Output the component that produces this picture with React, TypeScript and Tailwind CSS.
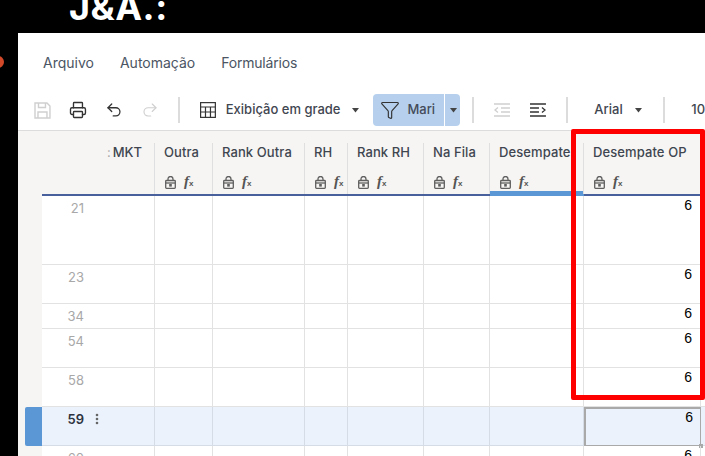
import React from "react";
import { Printer, Undo2, Redo2, Funnel } from "lucide-react";

const cols = [
  { name: "Outra", w: "w-[58px]" },
  { name: "Rank Outra", w: "w-[92px]" },
  { name: "RH", w: "w-[43px]" },
  { name: "Rank RH", w: "w-[76px]" },
  { name: "Na Fila", w: "w-[66px]" },
  { name: "Desempate", w: "w-[94px]" },
];

const rows = [
  { n: "21", h: "h-[69px]" },
  { n: "23", h: "h-[39px]" },
  { n: "34", h: "h-[25px]" },
  { n: "54", h: "h-[39px]" },
  { n: "58", h: "h-[39px]" },
  { n: "59", h: "h-[39px]", sel: true },
  { n: "60", h: "h-[39px]" },
];

const Caret = ({ className = "" }: { className?: string }) => (
  <svg width="7" height="5" viewBox="0 0 7 5" className={className}>
    <path d="M0 0h7L3.5 4.5z" fill="#444" />
  </svg>
);

const Sep = ({ className = "" }: { className?: string }) => (
  <div className={"h-[26px] w-[2px] shrink-0 bg-[#dcdcdc] " + className} />
);

const LockFx = () => (
  <div className="ml-[1px] flex items-center gap-[8px] text-[#555]">
    <svg width="11" height="13" viewBox="0 0 11 13" fill="none" stroke="#5f5f5f" strokeWidth="1.3">
      <path d="M3 4.5V3a2.5 2.5 0 0 1 5 0v1.5" />
      <rect x="0.7" y="4.5" width="9.6" height="7.8" rx="0.8" />
      <path d="M0.7 7h9.6" />
      <rect x="4.2" y="8" width="2.6" height="2.6" fill="#5f5f5f" stroke="none" />
    </svg>
    <span className="font-['Liberation_Serif',serif] text-[15px] leading-[14px] font-bold italic">
      f<span className="font-['Liberation_Sans',sans-serif] text-[8px] not-italic">x</span>
    </span>
  </div>
);

export default function App() {
  return (
    <div className="relative flex h-[456px] w-[705px] flex-col overflow-hidden bg-black font-['Inter',sans-serif]">
      <div className="h-[33px] shrink-0 overflow-hidden pl-[69px]">
        <div className="mt-[-11px] font-['Inter',sans-serif] text-[36px] leading-[36px] font-bold tracking-[0.5px] text-white">
          J&amp;A.:
        </div>
      </div>
      <div className="absolute top-[56px] left-[-8px] h-[12px] w-[12px] rounded-full bg-[#d2492a]" />

      <div className="ml-[18px] flex min-h-0 flex-1 flex-col overflow-hidden bg-white">
        <div className="flex h-[57px] shrink-0 items-center gap-[26px] pt-[1px] pl-[25px] text-[14px] text-[#4b5563]">
          <span>Arquivo</span>
          <span>Automação</span>
          <span className="tracking-[-0.2px]">Formulários</span>
        </div>

        <div className="flex h-[40px] shrink-0 items-center pl-[16px] text-[13px] whitespace-nowrap text-[#3f4650]">
          <svg width="17" height="17" viewBox="0 0 17 17" fill="none" stroke="#cfcfcf" strokeWidth="1.4">
            <path d="M1 1h12l3 3v12H1z" />
            <path d="M4.5 1v4.5h7V1M4 16v-6h9v6" />
          </svg>
          <Printer size={18} strokeWidth={1.8} color="#333" className="ml-[18px]" />
          <Undo2 size={18} strokeWidth={1.7} color="#333" className="ml-[18px]" />
          <Redo2 size={18} strokeWidth={1.5} color="#cfcfcf" className="ml-[18px]" />
          <Sep className="ml-[19px]" />
          <svg width="16" height="16" viewBox="0 0 16 16" fill="none" stroke="#333" strokeWidth="1.2" className="ml-[20px]">
            <rect x="0.6" y="0.6" width="14.8" height="14.8" />
            <path d="M0.6 5h14.8M0.6 10h14.8M5.5 5v10.4M10.5 5v10.4" />
          </svg>
          <span className="ml-[10px] w-[116px] font-medium">Exibição em grade</span>
          <Caret className="ml-[11px]" />
          <div className="ml-[14px] flex h-[32px] w-[87px] shrink-0 items-center rounded-[4px] bg-[#b5cfec]">
            <Funnel size={20} strokeWidth={1.4} color="#333" className="ml-[7px]" />
            <span className="ml-[7px] w-[30px] font-medium text-[#444b5a]">Mari</span>
            <div className="ml-[7px] h-full w-[1px] bg-white" />
            <Caret className="ml-[5px]" />
          </div>
          <Sep className="ml-[12px]" />
          <svg width="16" height="14" viewBox="0 0 16 14" fill="none" stroke="#cfcfcf" strokeWidth="1.3" className="ml-[20px]">
            <path d="M0 1h16M7 5h9M7 9h9M0 13h16M4 4.5L1 7l3 2.5" />
          </svg>
          <svg width="16" height="14" viewBox="0 0 16 14" fill="none" stroke="#333" strokeWidth="1.3" className="ml-[20px]">
            <path d="M0 1h16M0 5h9M0 9h9M0 13h16M12 4.5L15 7l-3 2.5" />
          </svg>
          <Sep className="ml-[20px]" />
          <span className="ml-[26px] w-[30px] font-medium">Arial</span>
          <Caret className="ml-[11px]" />
          <Sep className="ml-[21px]" />
          <span className="ml-[26px] font-medium">10</span>
        </div>

        <div className="flex min-h-0 flex-1 flex-col overflow-hidden border-t border-[#dcdcdc]">
          <div className="flex h-[65px] shrink-0 bg-[#f6f5f3]">
            <div className="h-full w-[24px] shrink-0" />
            <div className="flex h-full w-[113px] shrink-0 items-start justify-end border-b-2 border-[#48609c]">
              <div className="mt-[12px] flex h-[51px] items-start border-r border-[#dfdfdf] pr-[12px]">
                <span className="text-[13px] leading-[18px] font-medium text-[#3f4650]">
                  <span className="mr-[2px] font-normal text-[#aaaaaa]">:</span>MKT
                </span>
              </div>
            </div>
            {cols.map((c) => (
              <div
                key={c.name}
                className={
                  c.w +
                  " h-full shrink-0 overflow-hidden border-b-2 pt-[12px] " +
                  (c.name === "Desempate" ? "border-[#5b97d5] shadow-[inset_0_-3px_0_#5b97d5]" : "border-[#48609c]")
                }
              >
                <div className="flex h-[51px] flex-col justify-between border-r border-[#dfdfdf] pl-[9px]">
                  <span className="text-[13px] leading-[18px] font-medium tracking-[0.1px] whitespace-nowrap text-[#3f4650]">{c.name}</span>
                  <div className="mb-[3px]"><LockFx /></div>
                </div>
              </div>
            ))}
            <div className="h-full flex-1 border-b-2 border-[#48609c] pt-[12px]">
              <div className="flex h-[51px] flex-col justify-between pl-[9px]">
                <span className="text-[13px] leading-[18px] font-medium tracking-[0.1px] whitespace-nowrap text-[#3f4650]">Desempate OP</span>
                <div className="mb-[3px]"><LockFx /></div>
              </div>
            </div>
          </div>

          {rows.map((r) => (
            <div key={r.n} className={r.h + " flex shrink-0 " + (r.sel ? "bg-[#ebf2fb]" : "bg-white")}>
              <div className={"flex w-[24px] shrink-0 bg-[#f6f5f3] " + (r.sel ? "pl-[7px]" : "")}>
                {r.sel && <div className="h-full w-full rounded-l-[2px] bg-[#5b97d5]" />}
              </div>
              <div className={"flex w-[113px] shrink-0 border-r border-b pt-[3px] text-[13px] leading-[18px] " + (r.sel ? "border-[#d5dce6] font-semibold text-[#2d3340]" : "border-[#e2e2e2] text-[#a8a8a8]")}>
                <span className="w-[42px] text-right">{r.n}</span>
                {r.sel && (
                  <svg width="4" height="12" viewBox="0 0 4 12" className="mt-[3px] ml-[11px]" fill="#666">
                    <circle cx="2" cy="2" r="1.3" /><circle cx="2" cy="6" r="1.3" /><circle cx="2" cy="10" r="1.3" />
                  </svg>
                )}
              </div>
              {cols.map((c) => (
                <div key={c.name} className={c.w + " shrink-0 border-r border-b " + (r.sel ? "border-[#d5dce6]" : "border-[#e2e2e2]")} />
              ))}
              <div className={"relative w-[117px] shrink-0 border-r border-b text-right font-['Liberation_Sans',sans-serif] text-[14px] text-black " + (r.sel ? "border-2 border-[#a9a9a9] pr-[7px] leading-[16px]" : "border-[#e2e2e2] pr-[8px] leading-[18px]")}>
                6
                {r.sel && <div className="absolute right-[-3px] bottom-[-3px] h-[4px] w-[4px] bg-[#a9a9a9]" />}
              </div>
              <div className={"flex-1 border-b " + (r.sel ? "border-[#d5dce6]" : "border-[#e2e2e2]")} />
            </div>
          ))}
        </div>
      </div>

      <div className="pointer-events-none absolute top-[129px] left-[571px] h-[271px] w-[134px] rounded-[2px] border-[5px] border-[#ff0000]" />
    </div>
  );
}
